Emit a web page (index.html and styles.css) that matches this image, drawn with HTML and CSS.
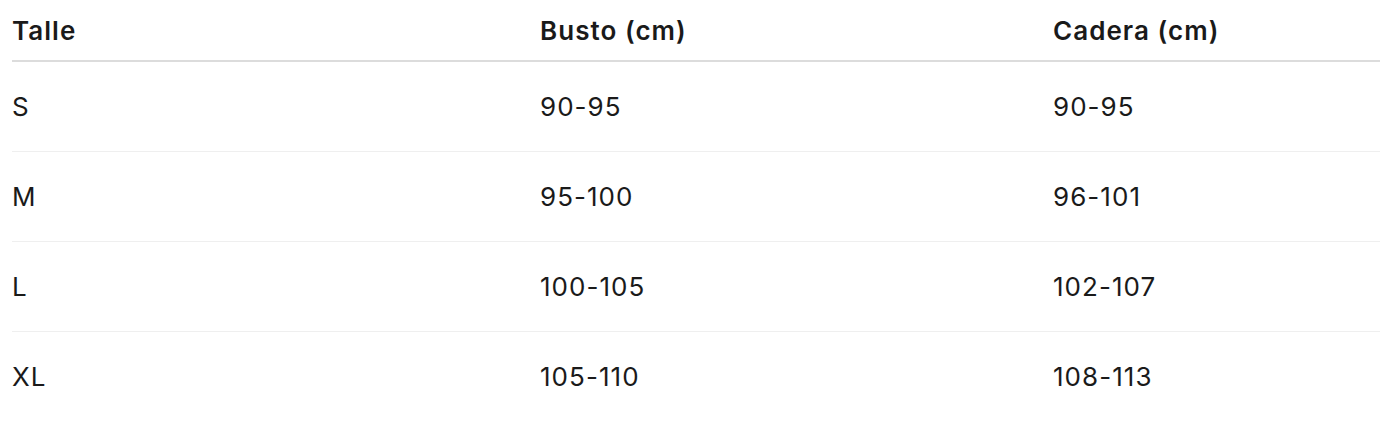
FILE: index.html
```html
<!DOCTYPE html>
<html lang="es">
<head>
<meta charset="utf-8">
<link rel="stylesheet" href="styles.css">
</head>
<body>
<table class="size-table">
  <colgroup>
    <col class="c1"><col class="c2"><col class="c3">
  </colgroup>
  <thead>
    <tr><th>Talle</th><th>Busto (cm)</th><th>Cadera (cm)</th></tr>
  </thead>
  <tbody>
    <tr><td>S</td><td>90-95</td><td>90-95</td></tr>
    <tr><td>M</td><td>95-100</td><td>96-101</td></tr>
    <tr><td>L</td><td>100-105</td><td>102-107</td></tr>
    <tr><td>XL</td><td>105-110</td><td>108-113</td></tr>
  </tbody>
</table>
</body>
</html>
```
FILE: styles.css
```css
html, body {
  margin: 0;
  padding: 0;
  background: #fff;
}
body {
  padding: 0 0 0 12px;
  font-family: Inter, "Liberation Sans", sans-serif;
  color: #1a1a1a;
}
.size-table {
  width: 1368px;
  border-collapse: collapse;
  table-layout: fixed;
  font-size: 26px;
  letter-spacing: 0.04em;
}
.c1 { width: 528px; }
.c2 { width: 513px; }
.c3 { width: 327px; }
.size-table th {
  text-align: left;
  font-weight: 600;
  height: 60px;
  padding: 0;
  border-bottom: 2px solid #dcdcdc;
  vertical-align: middle;
}
.size-table td {
  padding: 0;
  height: 89px;
  vertical-align: middle;
  border-bottom: 1px solid #efefef;
}
.size-table tbody tr:last-child td {
  border-bottom: none;
}
```
